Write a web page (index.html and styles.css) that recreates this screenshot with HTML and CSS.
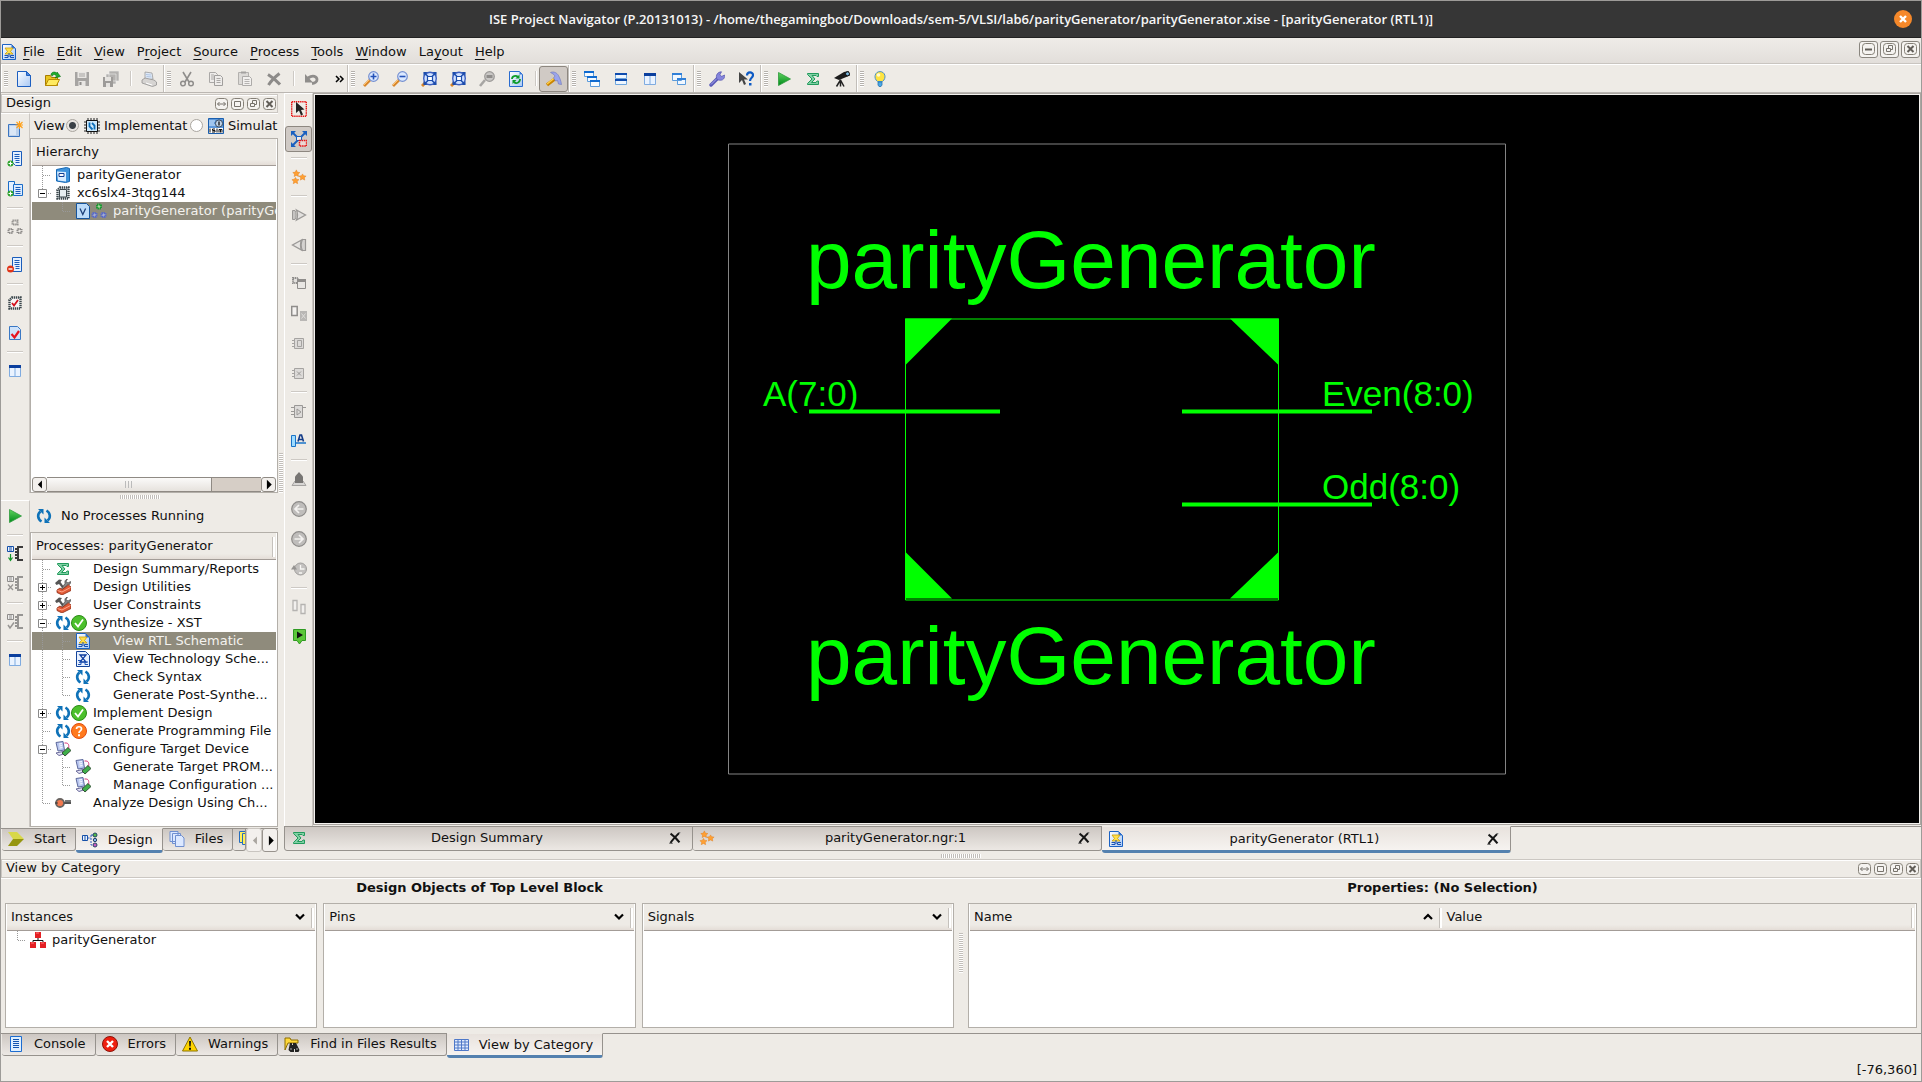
FILE: index.html
```html
<!DOCTYPE html>
<html lang="en">
<head>
<meta charset="utf-8">
<title>ISE Project Navigator</title>
<link rel="stylesheet" href="styles.css">
</head>
<body>
<svg class="sprite" aria-hidden="true">
  <defs>
    <linearGradient id="blueFill" x1="0" y1="0" x2="1" y2="1"><stop offset="0" stop-color="#fff"/><stop offset="1" stop-color="#a8c8f4"/></linearGradient>
    <linearGradient id="greenFill" x1="0" y1="0" x2="0" y2="1"><stop offset="0" stop-color="#5fd35f"/><stop offset="1" stop-color="#008a1c"/></linearGradient>
  </defs>
  <symbol id="new" viewBox="0 0 16 16"><path d="M1.500.5h9l4 4v11h-13z" fill="url(#blueFill)" stroke="#1d5fc0"/><path d="M10.500.5v4h4z" fill="#4a86e0" stroke="#1d5fc0"/></symbol>
  <symbol id="open" viewBox="0 0 16 16"><path d="M.5 14.500v-10h5l1 2h6v8z" fill="#e8c520" stroke="#a87c00"/><path d="M.5 14.500l3-6h11l-3 6z" fill="#ffea60" stroke="#b88a00"/><path d="M6 4c0-3 4-4 6-1.500V1l3.500 4.500L10 7l1.500-2C10 3 8 3 7.500 5z" fill="#1fae2c" stroke="#087012" stroke-width=".6"/></symbol>
  <symbol id="save" viewBox="0 0 16 16"><path d="M1 1h14v14H1z" fill="#a6a4a2"/><path d="M3.500 1h9v6h-9zM4.500 10h7v5h-7z" fill="#e8e6e3"/><path d="M5 3h6M5 5h6" stroke="#a6a4a2"/><path d="M5.500 11h2v3h-2z" fill="#8f8d8b"/></symbol>
  <symbol id="saveall" viewBox="0 0 16 16"><path d="M6 0h10v10H6zM3 3h10v10H3z" fill="#b4b2b0" stroke="#eee" stroke-width=".6"/><path d="M0 6h10v10H0z" fill="#9d9b99"/><path d="M2 6h6v4H2zM3 12h4v4H3z" fill="#e5e3e0"/></symbol>
  <symbol id="print" viewBox="0 0 16 16"><path d="M4 1l7 1 1 6-8 1z" fill="#dfe9f7" stroke="#9a9a9a" stroke-width=".8"/><path d="M1 9l3-2 9 2 2.500 2v3l-4 1.500L1 12z" fill="#d6d4d2" stroke="#929090" stroke-width=".8"/><path d="M5 12l6 2" stroke="#fff"/><path d="M5 3.500l5 .5M5.500 5.500l5 .5" stroke="#9bb5d8" stroke-width=".7"/></symbol>
  <symbol id="cut" viewBox="0 0 16 16"><path d="M4 1l6 10M12 1L6 11" stroke="#8f8d8b" stroke-width="1.600"/><circle cx="4" cy="12.500" r="2.300" fill="none" stroke="#8f8d8b" stroke-width="1.500"/><circle cx="12" cy="12.500" r="2.300" fill="none" stroke="#8f8d8b" stroke-width="1.500"/></symbol>
  <symbol id="copy" viewBox="0 0 16 16"><path d="M1.500 1.500h6l2 2v8h-8z" fill="#eeecea" stroke="#aaa8a6"/><path d="M6.500 4.500h6l2 2v8h-8z" fill="#eeecea" stroke="#a09e9c"/><path d="M8.500 7.500h4M8.500 9.500h4M8.500 11.500h4M3 4h3M3 6h3M3 8h3" stroke="#aaa8a6"/></symbol>
  <symbol id="paste" viewBox="0 0 16 16"><path d="M1.500 1.500h10v12h-10z" fill="#dcdad7" stroke="#b3b1ae"/><path d="M4 .5h5v2H4z" fill="#a3a19f"/><path d="M5.500 5.500h7l2 2v7h-9z" fill="#f2f0ee" stroke="#adaba9"/><path d="M7.500 8.500h5M7.500 10.500h5M7.500 12.500h5" stroke="#b5b3b1"/></symbol>
  <symbol id="delete" viewBox="0 0 16 16"><path d="M2 3.500C6 6 11 10 14 13.500M13.500 2.500C9 6 5 10 2.500 14" stroke="#8d8b89" stroke-width="3" fill="none"/></symbol>
  <symbol id="undo" viewBox="0 0 16 16"><path d="M4 7c5-3.500 9-1.500 9 1.500 0 2.500-2 3.500-5 4" stroke="#8f8d8b" stroke-width="2.800" fill="none"/><path d="M1 3v8.500h8z" fill="#8f8d8b"/></symbol>
  <symbol id="zoomin" viewBox="0 0 16 16"><path d="M7 9l-6 6" stroke="#d8862a" stroke-width="2.800"/><path d="M6 9l-5 5" stroke="#ffc46e"/><circle cx="10.500" cy="5.500" r="4.800" fill="#dce9ff" stroke="#7590d0" stroke-width="1.200"/><path d="M7.500 5.500h6M10.500 2.500v6" stroke="#2452b8" stroke-width="1.600"/></symbol>
  <symbol id="zoomout" viewBox="0 0 16 16"><path d="M7 9l-6 6" stroke="#d8862a" stroke-width="2.800"/><path d="M6 9l-5 5" stroke="#ffc46e"/><circle cx="10.500" cy="5.500" r="4.800" fill="#dce9ff" stroke="#7590d0" stroke-width="1.200"/><path d="M7.500 5.500h6" stroke="#2452b8" stroke-width="1.600"/></symbol>
  <symbol id="zoomfit" viewBox="0 0 16 16"><path d="M5 11l-4 4" stroke="#d8862a" stroke-width="3"/><circle cx="9" cy="7.500" r="6.300" fill="#cfe0ff" stroke="#3d60c0" stroke-width="1.400"/><path d="M3 1.500l12 12M15 1.500l-12 12" stroke="#1c4dac" stroke-width="1.400"/><path d="M6.500 5.500h5v4h-5z" fill="#fff" stroke="#1c4dac" stroke-width="1.200"/><path d="M2.500 1h4l-4 4zM15.500 1h-4l4 4zM2.500 14h4l-4-4zM15.500 14h-4l4-4z" fill="#1c4dac"/></symbol>
  <symbol id="zoomsel" viewBox="0 0 16 16"><path d="M6 9l-5 6" stroke="#a7a5a3" stroke-width="2.600"/><circle cx="10.500" cy="5.500" r="4.800" fill="#c9c7c5" stroke="#9b9997" stroke-width="1.200"/><path d="M7.500 4h6v3h-6z" fill="#8f8d8b"/></symbol>
  <symbol id="refresh" viewBox="0 0 16 16"><path d="M1.500.5h10l3 3v12h-13z" fill="url(#blueFill)" stroke="#2a6cd0"/><path d="M11.500.5v3h3z" fill="#3877d8"/><path d="M4 8c0-3 4-4 6-2M12 8c0 4-4 5-6 3" stroke="#0e9c2a" stroke-width="1.800" fill="none"/><path d="M11.500 3.500v4H7.500zM4.500 13V9H8.500z" fill="#0e9c2a"/></symbol>
  <symbol id="hammer" viewBox="0 0 16 16"><path d="M9.500 7.500L1 14" stroke="#c98400" stroke-width="3.400"/><path d="M9 6.500L1 13" stroke="#ffcf4a" stroke-width="1.400"/><path d="M4.500 1.500C8 0 11 2 12.500 4.500c1 2 2.500 5 3 9l-3-.5-1-3.500-2 .5L7.500 7l1.500-2C8 3 6 2.500 4.500 1.500z" fill="#9aa4ec" stroke="#6a74b8" stroke-width=".6"/></symbol>
  <symbol id="cascade" viewBox="0 0 16 16"><g fill="#f5faff" stroke="#5b9bdc"><path d="M.5.5h9v5h-9zM3.500 5.500h9v5h-9zM6.500 9.500h9v6h-9z"/></g><path d="M0 0h10v2H0zM3 5h10v2H3zM6 9h10v2H6z" fill="#0f6ad0"/></symbol>
  <symbol id="tileh" viewBox="0 0 16 16"><path d="M2.500 2.500h11v5h-11zM2.500 8.500h11v5h-11z" fill="#eef6ff" stroke="#6fa6de"/><path d="M2 2h12v2H2zM2 8h12v2H2z" fill="#0f4cae"/></symbol>
  <symbol id="tilev" viewBox="0 0 16 16"><path d="M2.500 2.500h11v11h-11zM8 3v10" fill="#eaf3ff" stroke="#7fabe0"/><path d="M2 2h12v3H2z" fill="#0b3f9e"/></symbol>
  <symbol id="winback" viewBox="0 0 16 16"><path d="M1.500 2.500h9v7h-9zM6.500 7.500h8v6h-8z" fill="#f0f7ff" stroke="#5b9bdc"/><path d="M1 2h10v2H1zM6 7h9v2H6z" fill="#2f7fd8"/></symbol>
  <symbol id="wrench" viewBox="0 0 16 16"><path d="M2 14L9 7" stroke="#5a5ab8" stroke-width="3.400" stroke-linecap="round"/><path d="M2 13.500L9 6.500" stroke="#a9a9f0"/><path d="M8 8.500C6 4 9 .8 12.500.8L11 3.500 12.500 5.500 15.500 4c.7 4.500-3 6.500-7.500 4.500z" fill="#8585dc" stroke="#5353ad" stroke-width=".7"/></symbol>
  <symbol id="whatsthis" viewBox="0 0 16 16"><path d="M1 1v11l3-3 2 5 2-1-2-4.500h4z" fill="#444"/><path d="M9 4.500c0-4 6-4 6-.5 0 3-3 2.500-3 6" stroke="#0e5ac4" stroke-width="2.200" fill="none"/><path d="M11 12h2.500v2.500H11z" fill="#0e5ac4"/></symbol>
  <symbol id="play" viewBox="0 0 16 16"><path d="M2.500 1.500L14.500 8l-12 6.500z" fill="url(#greenFill)" stroke="#2f9a3c" stroke-width=".8"/></symbol>
  <symbol id="sigma" viewBox="0 0 16 16"><path d="M2.500 2.500h11v3h-1.500L11 4.500H7L10 8l-3.500 3.500H11l1-1.500h1.500v3.500h-11v-1L7 8 2.500 3.500z" fill="#7fd0a4" stroke="#229a5c"/></symbol>
  <symbol id="scope" viewBox="0 0 16 16"><path d="M0 7l10-6 4.500-1 1.500 4.500L5 9z" fill="#1c1c1c"/><circle cx="13.500" cy="2.800" r="2" fill="#7db8dd" stroke="#111"/><path d="M6.500 8.500v7M6.500 9l-4 6.500M6.500 9l3.500 6.500" stroke="#222" stroke-width="1.500"/></symbol>
  <symbol id="bulb" viewBox="0 0 16 16"><path d="M5.500 10.500C1 7 3 .6 8 .6S15 7 10.500 10.500z" fill="#ffe340" stroke="#4a90c8"/><circle cx="6.500" cy="4" r="1.800" fill="#fffbd0"/><path d="M6 11h4v3l-1 1.500H7L6 14z" fill="#4aa8e8" stroke="#2a74b0" stroke-width=".8"/></symbol>
  <symbol id="newsrc" viewBox="0 0 16 16"><path d="M1.500 3.500h11v12h-11z" fill="#bcd1ec" stroke="#3a74c0"/><path d="M3 5h6v9H3z" fill="#dbe7f6"/><path d="M12.500 0v8M8.500 4h8M9.500 1l6 6M15.500 1l-6 6" stroke="#ffa21c" stroke-width="1.100"/></symbol>
  <symbol id="addsrc" viewBox="0 0 16 16"><path d="M5.500.5h9v14h-6l-3-3z" fill="#e4f0ff" stroke="#1a5cba"/><path d="M7.500 3.500h5M7.500 5.500h5M7.500 7.500h5M8.500 9.500h4M8.500 11.500h4" stroke="#1a5cba"/><circle cx="3.500" cy="12.500" r="3" fill="#27a027"/><path d="M1.500 12.500h4M3.500 10.500v4" stroke="#fff" stroke-width="1.200"/></symbol>
  <symbol id="addcopy" viewBox="0 0 16 16"><path d="M1.500.5h6v12h-6z" fill="#e4f0ff" stroke="#1a6cc8"/><path d="M6.500 3.500h9v11h-9z" fill="#dcebff" stroke="#1a6cc8"/><path d="M8.500 6.500h5M8.500 8.500h5M8.500 10.500h5M8.500 12.500h5" stroke="#1a5cba"/><circle cx="3.500" cy="12.500" r="3" fill="#27a027"/><path d="M1.500 12.500h4M3.500 10.500v4" stroke="#fff" stroke-width="1.200"/></symbol>
  <symbol id="remsrc" viewBox="0 0 16 16"><path d="M5.500.5h9v14h-9z" fill="#e4f0ff" stroke="#1a5cba"/><path d="M7.500 3.500h5M7.500 5.500h5M7.500 7.500h5M8.500 9.500h4M8.500 11.500h4" stroke="#1a5cba"/><circle cx="3.500" cy="12" r="3.500" fill="#e03418"/><path d="M1.500 12h4" stroke="#fff" stroke-width="1.400"/></symbol>
  <symbol id="modules" viewBox="0 0 16 16"><path d="M5.500 1.500h5v4h-5zM1.500 10h4v4h-4zM10.500 10h4v4h-4z" fill="none" stroke="#8c8a88" stroke-width="2" stroke-dasharray="1.300 .7"/></symbol>
  <symbol id="hier" viewBox="0 0 16 16"><path d="M6 1.500h4v4H6z" fill="#a9d8a0" stroke="#1d9a33" stroke-width="2" stroke-dasharray="1.500 .5"/><path d="M1.500 10h4v4h-4zM10.500 10h4v4h-4z" fill="#a4acd4" stroke="#5c6cc4" stroke-width="2" stroke-dasharray="1.500 .5"/></symbol>
  <symbol id="chip" viewBox="0 0 16 16"><path d="M5 2.500h8.500v11h-11V5z" fill="#e6edf0" stroke="#3c474c" stroke-width="2.400" stroke-dasharray="1.300 .7"/><path d="M4.500 5v7h7V4.500H5" stroke="#3c474c" fill="none"/></symbol>
  <symbol id="chipcheck" viewBox="0 0 16 16"><path d="M5 2.500h8.500v11h-11V5z" fill="#f6f6f6" stroke="#3c474c" stroke-width="2.400" stroke-dasharray="1.300 .7"/><path d="M5 8l2 2.500L11 5" stroke="#d3101c" stroke-width="1.800" fill="none"/></symbol>
  <symbol id="doccheck" viewBox="0 0 16 16"><path d="M2.500 1.500h8l3 3v10h-11z" fill="#cfe3fb" stroke="#3a78c4"/><path d="M4.500 9l3 3.500L12 6" stroke="#e81420" stroke-width="2.200" fill="none"/></symbol>
  <symbol id="rtl" viewBox="0 0 16 16"><path d="M1.500.5h9l4 4v11h-13z" fill="url(#blueFill)" stroke="#1b62c4"/><path d="M10.500.5v4h4z" fill="#2c6fd0"/><path d="M4 4h8L9.500 7.500 12 10H4l2.500-2.500z" fill="#ffdf4a" stroke="#caa00c" stroke-width=".8"/><path d="M8 9v4M3.500 11.500H7v2H3.500M13 11.500H9.500v2H13" stroke="#1b52b4" fill="none"/></symbol>
  <symbol id="tech" viewBox="0 0 16 16"><path d="M1.500.5h9l4 4v11h-13z" fill="#e8f1ff" stroke="#14459c"/><path d="M5 4h6L5 11h6z" fill="#fff" stroke="#0c3ca0" stroke-width="1.300"/><path d="M3 9.500h3v4H3M13 11h-3v2.500h3" stroke="#1b52b4" fill="none"/></symbol>
  <symbol id="vfile" viewBox="0 0 16 16"><path d="M1.500.5h10l3 3v12h-13z" fill="#bcdcfa" stroke="#15549c"/><path d="M5 5.500l2.800 6 2.800-6" stroke="#1b3f78" stroke-width="1.300" fill="none"/></symbol>
  <symbol id="project" viewBox="0 0 16 16"><path d="M1.500 2.500l10-2 3 1v13l-4 1-9-1.500z" fill="#3e93dc" stroke="#1668b4"/><path d="M2 4.500l9 .5v9.500l-8-1z" fill="#d9edff"/><path d="M4 6.500h5v3H4z" fill="#fff" stroke="#123f94"/></symbol>
  <symbol id="impl" viewBox="0 0 16 16"><path d="M4 0v16M7 0v16M10 0v16M13 0v16M0 4h16M0 7h16M0 10h16M0 13h16" stroke="#222"/><path d="M2.500 2.500h11v11h-11z" fill="#cde8fa" stroke="#111"/><path d="M5.500 4.500v4l3 3M10.500 11.500v-4L8 5" stroke="#0b6db8" stroke-width="1.800" fill="none"/></symbol>
  <symbol id="sim" viewBox="0 0 16 16"><path d="M.5.5h15v15H.5z" fill="#5c98dc" stroke="#1b5fae"/><path d="M1 3h6M1 5h5M1 7h7" stroke="#e5f3ff"/><circle cx="11" cy="5.500" r="3.600" fill="#bfd2e6" stroke="#3a4a5c"/><path d="M11 3.500v4" stroke="#111" stroke-width="1.300"/><path d="M1 10h14v5H1z" fill="#fff"/><path d="M2 10.500v4M7 11H4.500v1.500H7V14H4M9 10.500v4M11 14.500v-3h3v3M12.500 11.500v3" stroke="#111" fill="none"/></symbol>
  <symbol id="process" viewBox="0 0 16 16"><path d="M5.500 13.500C1.500 11 1 6 4.500 3.500M10.500 2.500c4 2.500 4.500 7.500 1 10" stroke="#0f72b8" stroke-width="2.600" fill="none"/><path d="M2 1h5.500v5.500zM14 15H8.500V9.500z" fill="#0f72b8"/></symbol>
  <symbol id="ok" viewBox="0 0 16 16"><circle cx="8" cy="8" r="7.500" fill="#4cc02c" stroke="#2b8a16"/><path d="M4 8l3 3.500 5-7" stroke="#fff" stroke-width="1.800" fill="none"/></symbol>
  <symbol id="unknown" viewBox="0 0 16 16"><circle cx="8" cy="8" r="7.500" fill="#ff7a1e" stroke="#e04c10"/><path d="M5.500 6c0-3 5-3 5 0 0 2-2.500 1.800-2.500 4" stroke="#fff" stroke-width="1.700" fill="none"/><path d="M7 11.300h2v2H7z" fill="#fff"/></symbol>
  <symbol id="tools" viewBox="0 0 16 16"><path d="M0 4l4-3.500 3 .5-1.500 2L9 8 7.500 9.500 4 5 1.500 6z" fill="#555"/><path d="M12.500 0L11 2.500 13 4l2.500-1.500C16 5 14 6.500 12 6L8 11 6.500 9.500l3.500-5C9.500 2 10.500.5 12.500 0z" fill="#888" stroke="#333" stroke-width=".6"/><path d="M2 11l3-2 2 1.500L13.500 6 16 8v3.500L7 16l-5-2.500z" fill="#e05a36" stroke="#8c2c14" stroke-width=".8"/><path d="M2.500 11.500L7 13l8.500-4.500" stroke="#ffa58a" fill="none"/></symbol>
  <symbol id="device" viewBox="0 0 16 16"><path d="M1 1.500l7-1 1.500 8.500L3 10z" fill="#b8c6f0" stroke="#5e6a9c"/><path d="M4 3l3-.4M4.200 5l3-.4M4.500 7l3-.4" stroke="#fff"/><path d="M1 12l7-1.500 2 2L4 14.500z" fill="#e6e6f6" stroke="#6a6a9a"/><path d="M9.500 2c5-.5 4.500 3 4 6" stroke="#d83a7c" fill="none"/><path d="M7 12l6-5.500 3 3L10 15z" fill="#3fae4a" stroke="#232" stroke-width=".8"/></symbol>
  <symbol id="analyze" viewBox="0 0 16 16"><circle cx="5" cy="8" r="4" fill="#f27a50" stroke="#6a6460" stroke-width="1.800"/><path d="M0 8h3" stroke="#333"/><path d="M9 8h7M11 5v4M13 5v4M15 5v4" stroke="#4a4a4a" stroke-width="1.500"/></symbol>
  <symbol id="impltop" viewBox="0 0 16 16"><path d="M.5.500h6v5h-6zM2 2h3M2 4h3" fill="#eaf3ff" stroke="#1650a8"/><path d="M3.500 8v6M1.500 11.500l2 3 2-3" stroke="#13962a" stroke-width="1.200" fill="none"/><path d="M16 1h-5v13h5M8 3h3M8 6h3M8 9h3M8 12h3" stroke="#3a3a3a" stroke-width="2" fill="none"/></symbol>
  <symbol id="implx" viewBox="0 0 16 16"><path d="M.5.500h6v5h-6zM2 2h3M2 4h3" fill="#eee" stroke="#8f8d8b"/><path d="M1 8.500l5 5.500M6 8.500L1 14" stroke="#979593" stroke-width="1.300"/><path d="M16 1h-5v13h5M8 3h3M8 6h3M8 9h3M8 12h3" stroke="#979593" stroke-width="2" fill="none"/></symbol>
  <symbol id="implc" viewBox="0 0 16 16"><path d="M.5.500h6v5h-6zM2 2h3M2 4h3" fill="#eee" stroke="#8f8d8b"/><path d="M1 11l2 3 4-5.500" stroke="#979593" stroke-width="1.500" fill="none"/><path d="M16 1h-5v13h5M8 3h3M8 6h3M8 9h3M8 12h3" stroke="#979593" stroke-width="2" fill="none"/></symbol>
  <symbol id="select" viewBox="0 0 16 16"><path d="M.7.700h14.600v14.600H.7z" fill="none" stroke="#e81414" stroke-width="1.400" stroke-dasharray="1.400 .7"/><path d="M5 1v11l3-2.500 2 5 2-1-2-4.500 3.500-.5z" fill="#222"/></symbol>
  <symbol id="zoomfull" viewBox="0 0 16 16"><path d="M2 2l12 12M14 2L2 14" stroke="#1a60c0" stroke-width="1.800"/><path d="M0 0h5L0 5zM16 0h-5l5 5zM0 16h5l-5-5z" fill="#1a60c0"/><path d="M5.500 5.500h5v4h-5z" fill="#eee" stroke="#1a60c0"/><path d="M8.500 9.500h7v5.500h-7z" fill="#ead8d4" stroke="#e81414" stroke-width="1.400" stroke-dasharray="1.500 .7"/></symbol>
  <symbol id="stars" viewBox="-1 -1 18 18"><path d="M5 0l1.200 2.500L9 3 7 4.800l.5 2.700L5 6.200 2.500 7.500 3 4.800 1 3l2.800-.5zM12 4.500l1.200 2 2.800.5-2 1.800.5 2.700-2.500-1.300-2.500 1.300.5-2.700L8 7l2.800-.5zM4 8.500l1.200 2 2.800.5-2 1.800.5 2.700L4 14.200l-2.500 1.300.5-2.700L0 11l2.800-.5z" fill="#ffa033" stroke="#e07a18" stroke-width=".5"/></symbol>
  <symbol id="gateout" viewBox="0 0 16 16"><path d="M1.500 3.500H4c1.500 2.500 1.500 6.500 0 9H1.500z" fill="#c6c4c2" stroke="#9a9896"/><path d="M5.500 3L14.500 8l-9 5c1.200-3 1.200-7 0-10z" fill="#e2e0de" stroke="#9a9896" stroke-width="1.300"/></symbol>
  <symbol id="gatein" viewBox="0 0 16 16"><path d="M11.500 2.500h3v11h-3c-1.500-3-1.500-8 0-11z" fill="#d4d2d0" stroke="#9a9896" stroke-width="1.200"/><path d="M10.500 3L1.500 8l9 5c-1.200-3-1.200-7 0-10z" fill="#e6e4e1" stroke="#9a9896" stroke-width="1.300"/></symbol>
  <symbol id="newwin" viewBox="0 0 16 16"><path d="M2 3h5v5H2z" fill="#e2e0dd" stroke="#8f8d8b" stroke-width="2" stroke-dasharray="1.200 .6"/><path d="M6.500 4.500h8v9h-8z" fill="#e8e6e3" stroke="#8f8d8b"/><path d="M6 4h9v3H6z" fill="#8f8d8b"/></symbol>
  <symbol id="pushin" viewBox="0 0 16 16"><path d="M.7 1.500h5.500v9H.7z" fill="#f4f2f0" stroke="#8f8d8b" stroke-width="1.500"/><path d="M9 6h7v10H9z" fill="#b9b7b5"/><path d="M10.500 8.500l4 5M14.500 8.500l-4 5" stroke="#e0dedc"/></symbol>
  <symbol id="block" viewBox="0 0 16 16"><path d="M3.500 3.500h9v10h-9zM1 5.500h2M1 8.500h2M1 11.500h2M6.500 5.500h4v6h-4z" fill="#dcdad8" stroke="#a5a3a1"/></symbol>
  <symbol id="blockx" viewBox="0 0 16 16"><path d="M3.500 3.500h9v10h-9zM1 5.500h2M1 8.500h2M1 11.500h2" fill="#dcdad8" stroke="#a5a3a1"/><path d="M6 6.500l4 4M10 6.500l-4 4" stroke="#9a9896"/></symbol>
  <symbol id="symbolport" viewBox="0 0 16 16"><path d="M3.500 2.500h8v12h-8zM0 4.500h3M0 8.500h3M0 11.500h3M12 4.500h3M6 6l4 3-4 3z" fill="#dddbd9" stroke="#9a9896"/></symbol>
  <symbol id="netname" viewBox="0 0 16 16"><path d="M.5 2.500h4v11h-4z" fill="#9fdcff" stroke="#1a74c8"/><path d="M5 10h10" stroke="#1a74c8" stroke-width="1.500"/><path d="M7 8.500L9 2h1.500L12.500 8.500M8 6.500h4" stroke="#143c88" stroke-width="1.600" fill="none"/></symbol>
  <symbol id="uparrow" viewBox="0 0 16 16"><path d="M4 10h8l3 4.500H1z" fill="#d8d6d4" stroke="#a5a3a1"/><path d="M8 1l4 4.500V12H4V5.500z" fill="#777573"/></symbol>
  <symbol id="back" viewBox="0 0 16 16"><circle cx="8" cy="8" r="7.300" fill="#bfbdbb" stroke="#8d8b89" stroke-width="1.200"/><path d="M12.500 8H4M8 4L4 8l4 4" stroke="#f4f2f0" stroke-width="1.700" fill="none"/></symbol>
  <symbol id="fwd" viewBox="0 0 16 16"><circle cx="8" cy="8" r="7.300" fill="#bfbdbb" stroke="#8d8b89" stroke-width="1.200"/><path d="M3.500 8H12M8 4l4 4-4 4" stroke="#f4f2f0" stroke-width="1.700" fill="none"/></symbol>
  <symbol id="history" viewBox="0 0 16 16"><circle cx="9.500" cy="8" r="6" fill="#c3c1bf" stroke="#a09e9c"/><path d="M9.500 4v4h4M8 12h3" stroke="#f8f6f4" stroke-width="1.300" fill="none"/><path d="M0 8.500h6L3 4z" fill="#959391"/></symbol>
  <symbol id="twoports" viewBox="0 0 16 16"><path d="M2 1.500h4v10H2zM10 5.500h4v9h-4z" fill="#f2f0ee" stroke="#b5b3b1" stroke-width="1.300"/></symbol>
  <symbol id="pinplay" viewBox="0 0 16 16"><path d="M2.500.5h12v11H11L8.500 15 6 11.500H2.500z" fill="#5cc83a" stroke="#2f9a22"/><path d="M6 2.500l6 3.500-6 3.500z" fill="#111"/></symbol>
  <symbol id="starttab" viewBox="0 0 16 16"><path d="M0 1h9l7 7H5z" fill="#d8d84a"/><path d="M5 8h11l-7 7H0z" fill="#969610"/></symbol>
  <symbol id="designtab" viewBox="0 0 16 16"><path d="M.5 3.500h5v5h-5zM2 5h2M2 7h2" fill="#eaf3ff" stroke="#1650a8"/><path d="M5.500 6H9M9 3v10h3M9 3h3" stroke="#2a5ac0" fill="none" stroke-dasharray="2 1"/><circle cx="13" cy="3" r="2" fill="#52b84a" stroke="#246"/><circle cx="13" cy="8" r="1.700" fill="#8ab0f0" stroke="#246"/><circle cx="13" cy="13" r="2" fill="#c85ac0" stroke="#246"/></symbol>
  <symbol id="filestab" viewBox="0 0 16 16"><g fill="#dce8ff" stroke="#6f8fd0"><path d="M1 .5h8v10H1zM3.500 2.500h8v10h-8z"/><path d="M6.500 4.500h6l2.500 2.500v8.500H6.500z"/></g></symbol>
  <symbol id="libtab" viewBox="0 0 16 16"><path d="M.5.500h9v11h-9z" fill="#fff05a" stroke="#246cc0"/><path d="M3.500 2.500h9v11h-9z" fill="#fff05a" stroke="#246cc0"/><path d="M6.500 4.500h8v11h-8z" fill="#ffe840" stroke="#246cc0"/></symbol>
  <symbol id="closex" viewBox="-1 -1 18 18"><path d="M3 3c3 2 7 6 10 10M12.500 2.500C8 7 5 10 3 13.500" stroke="#161616" stroke-width="2.300" fill="none"/><path d="M1.500 14h4M12 2h2" stroke="#555"/></symbol>
  <symbol id="console" viewBox="0 0 16 16"><path d="M2.500.5h11v15h-11z" fill="#dff0ff" stroke="#1d6cd0"/><path d="M5 3.500h6M5 5.500h6M5 7.500h6M5 9.500h6M5 11.500h6" stroke="#1254b0"/></symbol>
  <symbol id="error" viewBox="0 0 16 16"><circle cx="8" cy="8" r="7.500" fill="#ee2010" stroke="#8c1208"/><path d="M5 5l6 6M11 5l-6 6" stroke="#fff" stroke-width="2.400"/></symbol>
  <symbol id="warn" viewBox="0 0 16 16"><path d="M8 1l7.500 14H.5z" fill="#ffd400" stroke="#8c7400" stroke-linejoin="round"/><path d="M7 5h2l-.4 5.500H7.400zM7 11.800h2v2H7z" fill="#111"/></symbol>
  <symbol id="find" viewBox="0 0 16 16"><path d="M1 2h5l1 2h7v3H4l-3 7z" fill="#ffd83a" stroke="#8c6c00"/><path d="M6 7h2v2h1V7h3l3.500 7-1 2h-3.500v-3h-1v3H6.500l-2-2z" fill="#222"/><path d="M6 13h2M12 13h2" stroke="#aaa"/></symbol>
  <symbol id="grid" viewBox="0 0 16 16"><path d="M1.500 2.500h14v11h-14zM1.500 5h14M1.500 8h14M1.500 11h14M5 2.500v11M8.500 2.500v11M12 2.500v11" fill="#e2ecfc" stroke="#4f78c8"/></symbol>
  <symbol id="instance" viewBox="0 0 16 16"><path d="M8 6v3M3 11V8.500h10V11" stroke="#111" fill="none"/><path d="M5 0h6v6H5zM0 10h6v6H0zM10 10h6v6h-6z" fill="#e42024"/><path d="M6 1h3M1 11h3M11 11h3" stroke="#ff7a7a"/></symbol>
  <symbol id="w-lr" viewBox="0 0 13 12"><rect x=".5" y=".5" width="12" height="11" rx="3" fill="#f5f3f0" stroke="#858077"/><path d="M2.500 6h8M4.500 4L2.500 6l2 2M8.500 4l2 2-2 2" stroke="#77736c" fill="none"/></symbol>
  <symbol id="w-max" viewBox="0 0 13 12"><rect x=".5" y=".5" width="12" height="11" rx="3" fill="#f5f3f0" stroke="#858077"/><path d="M3.500 3.500h6v5h-6z" stroke="#77736c" fill="none"/></symbol>
  <symbol id="w-float" viewBox="0 0 13 12"><rect x=".5" y=".5" width="12" height="11" rx="3" fill="#f5f3f0" stroke="#858077"/><path d="M3.500 5.500h4v3h-4zM5.500 5V2.500h4v4H8" stroke="#77736c" fill="none"/></symbol>
  <symbol id="w-close" viewBox="0 0 13 12"><rect x=".5" y=".5" width="12" height="11" rx="3" fill="#f5f3f0" stroke="#858077"/><path d="M3.500 3l6 6M9.500 3l-6 6" stroke="#625e58" stroke-width="2"/></symbol>
  <symbol id="w-min" viewBox="0 0 13 12"><rect x=".5" y=".5" width="12" height="11" rx="3" fill="#f5f3f0" stroke="#858077"/><path d="M3 6.500h7" stroke="#625e58" stroke-width="2"/></symbol>
  <symbol id="t-mid" viewBox="0 0 20 18"><path d="M10.500 0v18M11 9.500h8" class="dots"/></symbol>
  <symbol id="t-last" viewBox="0 0 20 18"><path d="M10.500 0v10M11 9.500h8" class="dots"/></symbol>
  <symbol id="t-line" viewBox="0 0 20 18"><path d="M10.500 0v18" class="dots"/></symbol>
  <symbol id="t-plus" viewBox="0 0 20 18"><path d="M10.500 0v5M10.500 14v4M16 9.500h3" class="dots"/><path d="M6.500 5.500h8v8h-8z" fill="#fff" stroke="#8a8a8a"/><path d="M8 9.500h5M10.500 7v5" stroke="#000"/></symbol>
  <symbol id="t-minus" viewBox="0 0 20 18"><path d="M10.500 0v5M10.500 14v4M16 9.500h3" class="dots"/><path d="M6.500 5.500h8v8h-8z" fill="#fff" stroke="#8a8a8a"/><path d="M8 9.500h5" stroke="#000"/></symbol>
  <symbol id="t-minusend" viewBox="0 0 20 18"><path d="M10.500 0v5M16 9.500h3" class="dots"/><path d="M6.500 5.500h8v8h-8z" fill="#fff" stroke="#8a8a8a"/><path d="M8 9.500h5" stroke="#000"/></symbol>
  <symbol id="a-left" viewBox="0 0 16 16"><path d="M11 3v10L6 8z"/></symbol>
  <symbol id="a-right" viewBox="0 0 16 16"><path d="M6 2v12l6-6z"/></symbol>
  <symbol id="a-down" viewBox="0 0 10 8"><path d="M1 1.500l4 4 4-4" stroke="#000" stroke-width="2.200" fill="none"/></symbol>
  <symbol id="a-up" viewBox="0 0 10 8"><path d="M1 6l4-4 4 4" stroke="#000" stroke-width="2.200" fill="none"/></symbol>
</svg>

<header class="titlebar">
  <h1>ISE Project Navigator (P.20131013) - /home/thegamingbot/Downloads/sem-5/VLSI/lab6/parityGenerator/parityGenerator.xise - [parityGenerator (RTL1)]</h1>
  <button class="close" aria-label="Close window"><svg viewBox="0 0 18 18"><circle cx="9" cy="9" r="9" fill="#f5882a"/><path d="M6 6l6 6M12 6l-6 6" stroke="#fff" stroke-width="2.400"/></svg></button>
</header>

<nav class="menubar">
  <svg class="icon"><use href="#rtl"/></svg>
  <button><u>F</u>ile</button><button><u>E</u>dit</button><button><u>V</u>iew</button><button>P<u>r</u>oject</button><button><u>S</u>ource</button><button><u>P</u>rocess</button><button><u>T</u>ools</button><button><u>W</u>indow</button><button>La<u>y</u>out</button><button><u>H</u>elp</button>
  <div class="mdi">
    <button aria-label="Minimize"><svg class="wicon"><use href="#w-min"/></svg></button>
    <button aria-label="Restore"><svg class="wicon"><use href="#w-float"/></svg></button>
    <button aria-label="Close"><svg class="wicon"><use href="#w-close"/></svg></button>
  </div>
</nav>

<div class="toolbars">
  <div class="bar"><i class="handle"></i>
    <button aria-label="New"><svg class="icon"><use href="#new"/></svg></button><button aria-label="Open"><svg class="icon"><use href="#open"/></svg></button><button aria-label="Save"><svg class="icon"><use href="#save"/></svg></button><button aria-label="Save all"><svg class="icon"><use href="#saveall"/></svg></button><i class="sep"></i><button aria-label="Print"><svg class="icon"><use href="#print"/></svg></button>
  </div>
  <div class="bar"><i class="handle"></i>
    <button aria-label="Cut"><svg class="icon"><use href="#cut"/></svg></button><button aria-label="Copy"><svg class="icon"><use href="#copy"/></svg></button><button aria-label="Paste"><svg class="icon"><use href="#paste"/></svg></button><button aria-label="Delete"><svg class="icon"><use href="#delete"/></svg></button><i class="sep"></i><button aria-label="Undo"><svg class="icon"><use href="#undo"/></svg></button><button class="more" aria-label="More"><svg viewBox="0 0 10 8"><path d="M1 1l3 3-3 3M5 1l3 3-3 3" stroke="#000" stroke-width="1.500" fill="none"/></svg></button>
  </div>
  <div class="bar"><i class="handle"></i>
    <button aria-label="Zoom in"><svg class="icon"><use href="#zoomin"/></svg></button><button aria-label="Zoom out"><svg class="icon"><use href="#zoomout"/></svg></button><button aria-label="Zoom full"><svg class="icon"><use href="#zoomfit"/></svg></button><button aria-label="Zoom to box"><svg class="icon"><use href="#zoomfit"/></svg></button><button aria-label="Zoom to selected"><svg class="icon"><use href="#zoomsel"/></svg></button><button aria-label="Refresh"><svg class="icon"><use href="#refresh"/></svg></button><i class="sep"></i><button class="pressed" aria-label="Edit"><svg class="icon"><use href="#hammer"/></svg></button>
  </div>
  <div class="bar"><i class="handle"></i>
    <button aria-label="Cascade"><svg class="icon"><use href="#cascade"/></svg></button><button aria-label="Tile horizontally"><svg class="icon"><use href="#tileh"/></svg></button><button aria-label="Tile vertically"><svg class="icon"><use href="#tilev"/></svg></button><button aria-label="Float window"><svg class="icon"><use href="#winback"/></svg></button>
  </div>
  <div class="bar"><i class="handle"></i>
    <button aria-label="Preferences"><svg class="icon"><use href="#wrench"/></svg></button><button aria-label="What's this"><svg class="icon"><use href="#whatsthis"/></svg></button>
  </div>
  <div class="bar"><i class="handle"></i>
    <button aria-label="Run"><svg class="icon"><use href="#play"/></svg></button><button aria-label="Summary"><svg class="icon"><use href="#sigma"/></svg></button><button aria-label="Analyze"><svg class="icon"><use href="#scope"/></svg></button>
  </div>
  <div class="bar last"><i class="handle"></i>
    <button aria-label="Tips"><svg class="icon"><use href="#bulb"/></svg></button>
  </div>
</div>

<main class="workspace">
  <aside class="dock">
    <div class="docktitle"><h2>Design</h2>
      <button aria-label="Slide"><svg class="wicon"><use href="#w-lr"/></svg></button><button aria-label="Maximize"><svg class="wicon"><use href="#w-max"/></svg></button><button aria-label="Float"><svg class="wicon"><use href="#w-float"/></svg></button><button aria-label="Close"><svg class="wicon"><use href="#w-close"/></svg></button>
    </div>
    <section class="panel grow">
      <div class="vtools">
        <button aria-label="New source"><svg class="icon"><use href="#newsrc"/></svg></button><button aria-label="Add source"><svg class="icon"><use href="#addsrc"/></svg></button><button aria-label="Add copy"><svg class="icon"><use href="#addcopy"/></svg></button><i class="vsep"></i><button aria-label="Modules"><svg class="icon"><use href="#modules"/></svg></button><i class="vsep"></i><button aria-label="Remove source"><svg class="icon"><use href="#remsrc"/></svg></button><i class="vsep"></i><button aria-label="Design properties"><svg class="icon"><use href="#chipcheck"/></svg></button><button aria-label="Check"><svg class="icon"><use href="#doccheck"/></svg></button><i class="vsep"></i><button aria-label="Columns"><svg class="icon"><use href="#tilev"/></svg></button>
      </div>
      <div class="content">
        <div class="viewrow">
          <span class="vlabel">View</span>
          <input type="radio" name="view" id="impl-view" checked><label for="impl-view" class="wide"><svg class="icon"><use href="#impl"/></svg><span>Implementat</span></label>
          <input type="radio" name="view" id="sim-view"><label for="sim-view"><svg class="icon"><use href="#sim"/></svg><span>Simulat</span></label>
        </div>
        <div class="frame grow">
          <div class="head">Hierarchy</div>
          <ul class="tree">
            <li><svg class="tw"><use href="#t-mid"/></svg><svg class="icon"><use href="#project"/></svg><span>parityGenerator</span></li>
            <li><svg class="tw"><use href="#t-minusend"/></svg><svg class="icon"><use href="#chip"/></svg><span>xc6slx4-3tqg144</span></li>
            <li class="sel"><i class="tw"></i><svg class="tw"><use href="#t-last"/></svg><svg class="icon"><use href="#vfile"/></svg><svg class="icon"><use href="#hier"/></svg><span>parityGenerator (parityGe</span></li>
          </ul>
          <div class="hscroll"><button aria-label="Scroll left"><svg><use href="#a-left"/></svg></button><div class="track"><i class="thumb"></i></div><button aria-label="Scroll right"><svg><use href="#a-right"/></svg></button></div>
        </div>
      </div>
    </section>
    <div class="hsplit"></div>
    <section class="panel">
      <div class="vtools">
        <button aria-label="Run process"><svg class="icon"><use href="#play"/></svg></button><i class="vsep"></i><button aria-label="Implement top"><svg class="icon"><use href="#impltop"/></svg></button><button aria-label="Stop"><svg class="icon"><use href="#implx"/></svg></button><i class="vsep"></i><button aria-label="Validate"><svg class="icon"><use href="#implc"/></svg></button><i class="vsep"></i><button aria-label="Columns"><svg class="icon"><use href="#tilev"/></svg></button>
      </div>
      <div class="content">
        <p class="status"><svg class="icon"><use href="#process"/></svg>No Processes Running</p>
        <div class="frame">
          <div class="head ticked">Processes: parityGenerator</div>
          <ul class="tree procs">
            <li><svg class="tw"><use href="#t-mid"/></svg><span class="ics"><svg class="icon"><use href="#sigma"/></svg></span><span>Design Summary/Reports</span></li>
            <li><svg class="tw"><use href="#t-plus"/></svg><span class="ics"><svg class="icon"><use href="#tools"/></svg></span><span>Design Utilities</span></li>
            <li><svg class="tw"><use href="#t-plus"/></svg><span class="ics"><svg class="icon"><use href="#tools"/></svg></span><span>User Constraints</span></li>
            <li><svg class="tw"><use href="#t-minus"/></svg><span class="ics"><svg class="icon"><use href="#process"/></svg><svg class="icon"><use href="#ok"/></svg></span><span>Synthesize - XST</span></li>
            <li class="sel"><svg class="tw"><use href="#t-line"/></svg><svg class="tw"><use href="#t-mid"/></svg><span class="ics"><svg class="icon"><use href="#rtl"/></svg></span><span>View RTL Schematic</span></li>
            <li><svg class="tw"><use href="#t-line"/></svg><svg class="tw"><use href="#t-mid"/></svg><span class="ics"><svg class="icon"><use href="#tech"/></svg></span><span>View Technology Sche...</span></li>
            <li><svg class="tw"><use href="#t-line"/></svg><svg class="tw"><use href="#t-mid"/></svg><span class="ics"><svg class="icon"><use href="#process"/></svg></span><span>Check Syntax</span></li>
            <li><svg class="tw"><use href="#t-line"/></svg><svg class="tw"><use href="#t-last"/></svg><span class="ics"><svg class="icon"><use href="#process"/></svg></span><span>Generate Post-Synthe...</span></li>
            <li><svg class="tw"><use href="#t-plus"/></svg><span class="ics"><svg class="icon"><use href="#process"/></svg><svg class="icon"><use href="#ok"/></svg></span><span>Implement Design</span></li>
            <li><svg class="tw"><use href="#t-mid"/></svg><span class="ics"><svg class="icon"><use href="#process"/></svg><svg class="icon"><use href="#unknown"/></svg></span><span>Generate Programming File</span></li>
            <li><svg class="tw"><use href="#t-minus"/></svg><span class="ics"><svg class="icon"><use href="#device"/></svg></span><span>Configure Target Device</span></li>
            <li><svg class="tw"><use href="#t-line"/></svg><svg class="tw"><use href="#t-mid"/></svg><span class="ics"><svg class="icon"><use href="#device"/></svg></span><span>Generate Target PROM...</span></li>
            <li><svg class="tw"><use href="#t-line"/></svg><svg class="tw"><use href="#t-last"/></svg><span class="ics"><svg class="icon"><use href="#device"/></svg></span><span>Manage Configuration ...</span></li>
            <li><svg class="tw"><use href="#t-last"/></svg><span class="ics"><svg class="icon"><use href="#analyze"/></svg></span><span>Analyze Design Using Ch...</span></li>
          </ul>
        </div>
      </div>
    </section>
    <div class="tabs docktabs">
      <button class="tab"><svg class="icon"><use href="#starttab"/></svg>Start</button><button class="tab on"><svg class="icon"><use href="#designtab"/></svg>Design</button><button class="tab"><svg class="icon"><use href="#filestab"/></svg>Files</button><button class="tab cut" aria-label="Libraries"><svg class="icon"><use href="#libtab"/></svg></button>
      <button class="scroller dim" aria-label="Previous tabs"><svg><use href="#a-left"/></svg></button><button class="scroller" aria-label="Next tabs"><svg><use href="#a-right"/></svg></button>
    </div>
  </aside>
  <div class="vsplit"></div>
  <section class="editor">
    <div class="editrow">
      <div class="vtools schem">
        <button aria-label="Select"><svg class="icon"><use href="#select"/></svg></button><button class="pressed" aria-label="Zoom to full"><svg class="icon"><use href="#zoomfull"/></svg></button><i class="vsep"></i><button aria-label="Wizard"><svg class="icon"><use href="#stars"/></svg></button><i class="vsep"></i><button aria-label="Add output cone"><svg class="icon"><use href="#gateout"/></svg></button><button aria-label="Add input cone"><svg class="icon"><use href="#gatein"/></svg></button><i class="vsep"></i><button aria-label="New view"><svg class="icon"><use href="#newwin"/></svg></button><button aria-label="Push"><svg class="icon"><use href="#pushin"/></svg></button><button aria-label="Show block"><svg class="icon"><use href="#block"/></svg></button><button aria-label="Hide block"><svg class="icon"><use href="#blockx"/></svg></button><i class="vsep"></i><button aria-label="Ports"><svg class="icon"><use href="#symbolport"/></svg></button><button aria-label="Net names"><svg class="icon"><use href="#netname"/></svg></button><i class="vsep"></i><button aria-label="Pop"><svg class="icon"><use href="#uparrow"/></svg></button><button aria-label="Back"><svg class="icon"><use href="#back"/></svg></button><button aria-label="Forward"><svg class="icon"><use href="#fwd"/></svg></button><button aria-label="History"><svg class="icon"><use href="#history"/></svg></button><i class="vsep"></i><button aria-label="Compare"><svg class="icon"><use href="#twoports"/></svg></button><button aria-label="Show tips"><svg class="icon"><use href="#pinplay"/></svg></button>
      </div>
      <div class="canvas">
        <svg viewBox="315 96 1604 727" role="img" aria-label="parityGenerator schematic">
          <path class="sheet" d="M728.500 144.500h777v630h-777z"/>
          <path class="box" d="M905.500 319.500h373v281h-373z"/>
          <path class="solid" d="M905 319h47l-47 47zM1279 319h-49l49 47zM905 552v47h47zM1279 552v47h-49z"/>
          <path class="solid" d="M809 410h191v4H809zM1182 410h190v4h-190zM1182 503h190v4h-190z"/>
          <text class="name" x="806" y="288">parityGenerator</text>
          <text class="name" x="806" y="684">parityGenerator</text>
          <text class="pin" x="763" y="406">A(7:0)</text>
          <text class="pin" x="1322" y="406">Even(8:0)</text>
          <text class="pin" x="1322" y="499">Odd(8:0)</text>
        </svg>
      </div>
    </div>
    <div class="tabs doctabs">
      <button class="tab"><svg class="icon"><use href="#sigma"/></svg><span>Design Summary</span><svg class="icon"><use href="#closex"/></svg></button><button class="tab"><svg class="icon"><use href="#stars"/></svg><span>parityGenerator.ngr:1</span><svg class="icon"><use href="#closex"/></svg></button><button class="tab on"><svg class="icon"><use href="#rtl"/></svg><span>parityGenerator (RTL1)</span><svg class="icon"><use href="#closex"/></svg></button>
    </div>
  </section>
</main>

<div class="hsplit main"></div>
<section class="bottom">
  <div class="docktitle"><h2>View by Category</h2>
    <button aria-label="Slide"><svg class="wicon"><use href="#w-lr"/></svg></button><button aria-label="Maximize"><svg class="wicon"><use href="#w-max"/></svg></button><button aria-label="Float"><svg class="wicon"><use href="#w-float"/></svg></button><button aria-label="Close"><svg class="wicon"><use href="#w-close"/></svg></button>
  </div>
  <div class="halves">
    <div class="half">
      <h3>Design Objects of Top Level Block</h3>
      <div class="lists">
        <div class="frame"><div class="head ticked">Instances<svg class="arrow"><use href="#a-down"/></svg></div>
          <ul class="tree"><li><svg class="tw"><use href="#t-last"/></svg><svg class="icon"><use href="#instance"/></svg><span>parityGenerator</span></li></ul></div>
        <div class="frame"><div class="head ticked">Pins<svg class="arrow"><use href="#a-down"/></svg></div></div>
        <div class="frame"><div class="head ticked">Signals<svg class="arrow"><use href="#a-down"/></svg></div></div>
      </div>
    </div>
    <div class="vsplit mid"></div>
    <div class="half">
      <h3>Properties: (No Selection)</h3>
      <div class="lists"><div class="frame">
        <table><thead><tr><th><div class="head ticked">Name<svg class="arrow"><use href="#a-up"/></svg></div></th><th><div class="head ticked">Value</div></th></tr></thead></table>
      </div></div>
    </div>
  </div>
  <div class="tabs bottomtabs">
    <button class="tab"><svg class="icon"><use href="#console"/></svg>Console</button><button class="tab"><svg class="icon"><use href="#error"/></svg>Errors</button><button class="tab"><svg class="icon"><use href="#warn"/></svg>Warnings</button><button class="tab"><svg class="icon"><use href="#find"/></svg>Find in Files Results</button><button class="tab on"><svg class="icon"><use href="#grid"/></svg>View by Category</button>
  </div>
</section>
<footer class="statusbar">[-76,360]</footer>
</body>
</html>
```
FILE: styles.css
```css
* { box-sizing: border-box; }
body {
  margin: 0;
  min-height: 100vh;
  display: flex;
  flex-direction: column;
  border: 1px solid #9d9b98;
  background: #eeebe6;
  color: #111;
  font: 13px/18px "DejaVu Sans", sans-serif;
}
h1, h2, h3, p, ul { margin: 0; padding: 0; font-size: 13px; }
ul { list-style: none; }
button { margin: 0; padding: 0; border: 0; background: none; color: inherit; font: inherit; white-space: nowrap; }
svg { display: block; flex: none; }
.sprite { position: absolute; width: 0; height: 0; }
.icon { width: 16px; height: 16px; }
.wicon { width: 13px; height: 12px; }
.dots { stroke: #999; fill: none; stroke-dasharray: 1 1; }

.titlebar { display: flex; align-items: center; height: 37px; padding: 0 9px 0 27px; background: #363636; border-bottom: 1px solid #222; }
.titlebar h1 { flex: 1; text-align: center; color: #f6f6f6; font: 600 13px/20px "Open Sans", sans-serif; white-space: nowrap; }
.close { width: 18px; height: 18px; }

.menubar { display: flex; align-items: center; height: 27px; padding-top: 1px; background: linear-gradient(#efece8, #e2deda); border-bottom: 1px solid #fff; box-shadow: inset 0 -1px #c9c5c0; }
.menubar > button { padding: 1px 6px 0; }
.menubar u { text-underline-offset: 3px; }
.mdi { display: flex; gap: 2px; margin-left: auto; padding: 0 1px 5px 0; }
.mdi button { display: grid; place-items: center; width: 19px; height: 17px; border: 1px solid #8a867f; border-radius: 3px; background: #f6f4f1; }

.toolbars { display: flex; height: 28px; border-bottom: 1px solid #bbb7b2; }
.bar { display: flex; align-items: center; padding-left: 3px; border-right: 1px solid #c2beb9; box-shadow: inset 1px 0 #fff; }
.bar.last { border: 0; flex: 1; }
.bar button { display: grid; place-items: center; width: 29px; height: 26px; }
.bar .more { width: 21px; padding-left: 7px; }
.more svg { width: 10px; height: 8px; }
.handle { width: 4px; height: 16px; margin-right: 1px; background: repeating-linear-gradient(#b5b1ac 0 1px, #fff 1px 2px); }
.sep { width: 2px; height: 15px; margin: 0 2px 0 5px; border-left: 1px solid #cdc9c4; background: #fff; }
.bar .pressed, .vtools .pressed { border: 1px solid #8d8780; border-radius: 3px; background: #d0cac5; }

.workspace { flex: 1; display: flex; min-height: 0; }
.dock { display: flex; flex-direction: column; width: 277px; }
.docktitle { display: flex; align-items: center; height: 19px; gap: 3px; padding: 0 1px 0 4px; margin-top: 1px; border: 1px solid #cbc7c2; box-shadow: inset 0 1px #fff, 0 1px #fff; }
.docktitle h2 { flex: 1; font-weight: normal; line-height: 16px; padding-bottom: 2px; }
.panel { display: flex; }
.grow { flex: 1; }
.vtools { display: flex; flex-direction: column; align-items: center; width: 29px; border-right: 1px solid #cbc7c2; border-top: 1px solid #fff; }
.vtools button { display: grid; place-items: center; width: 27px; height: 30px; }
.vtools .pressed { height: 26px; margin: 2px 0; }
.vsep { width: 16px; height: 2px; margin: 3px 0; border-top: 1px solid #cdc9c4; background: #fff; }
.content { flex: 1; min-width: 0; display: flex; flex-direction: column; }
.viewrow { display: flex; align-items: center; height: 25px; padding-left: 4px; overflow: hidden; }
.vlabel { width: 32px; }
.viewrow label { display: flex; align-items: center; gap: 4px; padding-left: 5px; white-space: nowrap; }
.viewrow label.wide { width: 108px; }
.viewrow input { appearance: none; flex: none; width: 13px; height: 13px; margin: 0; border: 1px solid #a9a59f; border-radius: 50%; background: #fff; }
.viewrow .wide + input { margin-left: 3px; }
.viewrow input:checked { background: radial-gradient(#3a4046 0 3px, #e8e5e1 4px); }
.frame { display: flex; flex-direction: column; border: 1px solid #b3afa9; padding: 0 1px; background: #fff; min-width: 0; }
.head { position: relative; display: flex; align-items: center; height: 27px; padding: 0 5px 0 4px; border-bottom: 1px solid #a39c97; background: linear-gradient(#eeebe6 80%, #e4ddd7); font-weight: normal; text-align: left; }
.ticked::after { content: ""; position: absolute; right: 1px; top: 4px; width: 2px; height: 20px; border-left: 1px solid #c5c1bc; background: #fff; }
.arrow { width: 10px; height: 8px; margin-left: auto; margin-right: 5px; }
.tree { flex: 1; overflow: hidden; }
.tree li { display: flex; align-items: center; height: 18px; white-space: nowrap; }
.tw { flex: none; width: 20px; height: 18px; }
.tw + .icon, .tw + .ics { margin-left: 3px; }
.tree .icon + span, .ics + span { margin-left: 6px; }
.ics { display: flex; flex: none; width: 32px; }
.sel { background: #8f8b7c; color: #f4f2ee; }
.procs { padding-bottom: 14px; }
.hscroll { display: flex; height: 15px; }
.hscroll button { width: 15px; border: 1px solid #8f8a84; border-radius: 3px; background: #f3f0ed; }
.hscroll svg, .scroller svg { width: 13px; height: 13px; margin: auto; }
.track { flex: 1; background: #d6cec6; border: solid #8f8a84; border-width: 1px 0; }
.thumb { display: block; width: 77%; height: 13px; border-right: 1px solid #8f8a84; background: linear-gradient(90deg, transparent calc(50% - 4px), #bbb 0 calc(50% - 3px), transparent 0 calc(50% - 1px), #bbb 0 50%, transparent 0 calc(50% + 2px), #bbb 0 calc(50% + 3px), transparent 0) center / 100% 7px no-repeat, linear-gradient(#fbfaf9, #e6e2dd); }
.hsplit { height: 7px; background: repeating-linear-gradient(90deg, #c2beb9 0 1px, #fff 1px 2px) center / 40px 4px no-repeat; }
.hsplit.main { height: 5px; }
.vsplit { width: 6px; background: repeating-linear-gradient(#c2beb9 0 1px, #fff 1px 2px) center / 4px 40px no-repeat; }
.vsplit.mid { width: 14px; }
.status { display: flex; align-items: center; gap: 9px; height: 32px; padding-left: 6px; }

.editor { flex: 1; min-width: 0; display: flex; flex-direction: column; }
.editrow { flex: 1; display: flex; min-height: 0; }
.schem { border-left: 1px solid #fff; }
.canvas { flex: 1; min-width: 0; display: grid; border: 1px solid #aaa6a1; outline: 1px solid #f4f2ef; outline-offset: -2px; padding: 1px; margin-bottom: 1px; }
.canvas svg { width: 100%; height: 100%; min-height: 0; background: #000; }
.sheet { fill: none; stroke: #848484; }
.box { fill: none; stroke: #0f0; }
.solid, .name, .pin { fill: #0f0; }
.name { font: 82px "Liberation Sans", sans-serif; }
.pin { font: 35px "Liberation Sans", sans-serif; }

.tabs { display: flex; align-items: flex-start; height: 27px; box-shadow: inset 0 1px #96928d; }
.tab { display: flex; align-items: center; gap: 10px; height: 23px; padding: 0 9px 2px 6px; border: solid #96928d; border-width: 1px 1px 1px 0; border-radius: 0 0 3px 3px; background: linear-gradient(#cdc7c2, #ece8e4); }
.tab:first-child { margin-left: 1px; }
.tab.on { height: 25px; padding-bottom: 0; border-top-color: #eeebe6; border-bottom: 3px solid #5481af; background: linear-gradient(#e8e2dd, #f6f3f0); }
.docktabs { margin-top: 1px; height: 25px; }
.docktabs .cut { flex: 1; overflow: hidden; padding-right: 0; }
.scroller { width: 16px; height: 24px; display: grid; border: 1px solid #98938d; border-radius: 3px; background: #f3f0ed; }
.dim { fill: #aaa6a0; border-color: #c9c5c0; }
.doctabs .tab { flex: 0 1 409px; height: 25px; }
.doctabs .tab.on { height: 27px; }
.doctabs .tab:first-child { margin-left: 0; border-left-width: 1px; }
.doctabs .tab span { flex: 1; }

.bottom .docktitle { padding-right: 1px; }
.halves { display: flex; padding: 0 4px; }
.half { flex: 1; min-width: 0; }
.half h3 { height: 25px; padding-top: 1px; text-align: center; font-weight: bold; }
.lists { display: flex; gap: 6px; }
.lists .frame { flex: 1; min-height: 125px; }
table { width: 100%; border-collapse: collapse; }
th { width: 50%; padding: 0; }
.bottomtabs { margin-top: 5px; height: 24px; }
.statusbar { height: 24px; padding: 1px 4px 0 0; text-align: right; line-height: 24px; }
```
